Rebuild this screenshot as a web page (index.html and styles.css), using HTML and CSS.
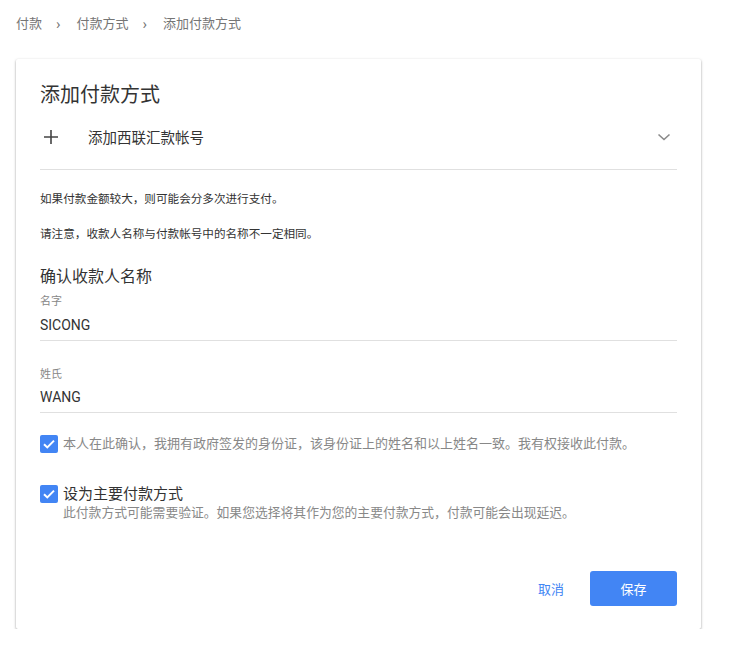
FILE: index.html
```html
<!DOCTYPE html>
<html lang="zh-CN">
<head>
<meta charset="utf-8">
<link rel="stylesheet" href="styles.css">
</head>
<body>
<nav class="crumbs">
  <span>付款</span>
  <span class="sep">›</span>
  <span>付款方式</span>
  <span class="sep">›</span>
  <span>添加付款方式</span>
</nav>
<main class="card">
  <h1 class="title">添加付款方式</h1>
  <div class="add-row">
    <svg class="plus" width="16" height="16" viewBox="0 0 16 16"><path d="M8 1v14M1 8h14" stroke="#444" stroke-width="1.6" fill="none"/></svg>
    <span class="add-label">添加西联汇款帐号</span>
    <svg class="chev" width="14" height="10" viewBox="0 0 14 10"><path d="M1.5 2.5L7 7.5l5.5-5" stroke="#8a8a8a" stroke-width="1.6" fill="none"/></svg>
  </div>
  <p class="note first">如果付款金额较大，则可能会分多次进行支付。</p>
  <p class="note second">请注意，收款人名称与付款帐号中的名称不一定相同。</p>
  <h2 class="subhead">确认收款人名称</h2>
  <div class="field">
    <div class="field-label">名字</div>
    <div class="field-value">SICONG</div>
  </div>
  <div class="field second-field">
    <div class="field-label">姓氏</div>
    <div class="field-value">WANG</div>
  </div>
  <div class="check-row confirm">
    <span class="box"><svg width="18" height="18" viewBox="0 0 18 18"><path d="M4 9.2l3.3 3.2L14 5.6" stroke="#fff" stroke-width="2" fill="none"/></svg></span>
    <span class="check-text">本人在此确认，我拥有政府签发的身份证，该身份证上的姓名和以上姓名一致。我有权接收此付款。</span>
  </div>
  <div class="check-row primary">
    <span class="box"><svg width="18" height="18" viewBox="0 0 18 18"><path d="M4 9.2l3.3 3.2L14 5.6" stroke="#fff" stroke-width="2" fill="none"/></svg></span>
    <div>
      <div class="primary-title">设为主要付款方式</div>
      <div class="primary-sub">此付款方式可能需要验证。如果您选择将其作为您的主要付款方式，付款可能会出现延迟。</div>
    </div>
  </div>
  <div class="actions">
    <button class="btn-cancel">取消</button>
    <button class="btn-save">保存</button>
  </div>
</main>
</body>
</html>
```
FILE: styles.css
```css
* { box-sizing: border-box; }
body {
  margin: 0;
  background: #fff;
  font-family: Roboto, "Noto Sans CJK SC", sans-serif;
  color: #333;
  width: 732px;
}
.crumbs {
  padding: 14px 16px 0;
  height: 34px;
  font-size: 13px;
  line-height: 20px;
  color: #757575;
  display: flex;
}
.crumbs .sep {
  margin: 0 16px 0 14px;
  font-size: 15px;
}
.card {
  margin: 25px 0 0 16px;
  width: 685px;
  padding: 22px 24px 23px;
  background: #fff;
  box-shadow: 0 1px 3px rgba(0,0,0,0.28), 0 1px 2px rgba(0,0,0,0.14);
  border-radius: 2px;
}
.title {
  margin: 0;
  font-size: 20px;
  line-height: 28px;
  font-weight: 400;
  color: #333;
}
.add-row {
  display: flex;
  align-items: center;
  border-bottom: 1px solid #e0e0e0;
  height: 61px;
  padding-bottom: 5px;
}
.plus { margin-left: 3px; }
.add-label {
  margin-left: 29px;
  font-size: 14.5px;
  color: #333;
  flex: 1;
}
.chev { margin-right: 6px; }
.note {
  margin: 0;
  font-size: 11.6px;
  line-height: 20px;
  color: #333;
}
.note.first { margin-top: 19px; }
.note.second { margin-top: 15px; }
.subhead {
  margin: 21px 0 0;
  font-size: 16px;
  line-height: 24px;
  font-weight: 400;
  color: #333;
}
.field {
  margin-top: 5px;
  border-bottom: 1px solid #e0e0e0;
  padding-bottom: 5px;
}
.field.second-field { margin-top: 26px; }
.field-label {
  font-size: 11px;
  line-height: 16px;
  color: #888;
}
.field-value {
  margin-top: 5px;
  font-size: 14px;
  line-height: 20px;
  color: #333;
}
.second-field .field-value { margin-top: 4px; }
.check-row {
  display: flex;
  align-items: flex-start;
  gap: 5px;
}
.check-row.confirm { margin-top: 21px; }
.check-row.primary { margin-top: 30px; }
.box {
  width: 18px;
  height: 18px;
  flex: none;
  border-radius: 2px;
  background: #4285f4;
  margin-top: 1px;
  display: flex;
}
.check-text {
  font-size: 13px;
  line-height: 20px;
  color: #888;
}
.primary-title {
  font-size: 15px;
  line-height: 20px;
  color: #333;
}
.primary-sub {
  font-size: 12.8px;
  line-height: 18px;
  color: #888;
}
.actions {
  margin-top: 49px;
  display: flex;
  justify-content: flex-end;
  gap: 14px;
}
.actions button {
  font-family: inherit;
  font-size: 13px;
  border: none;
  border-radius: 3px;
  height: 35px;
  cursor: pointer;
}
.btn-cancel {
  background: none;
  color: #4285f4;
  padding: 0 12px;
}
.btn-save {
  background: #4285f4;
  color: #fff;
  width: 87px;
}
```
